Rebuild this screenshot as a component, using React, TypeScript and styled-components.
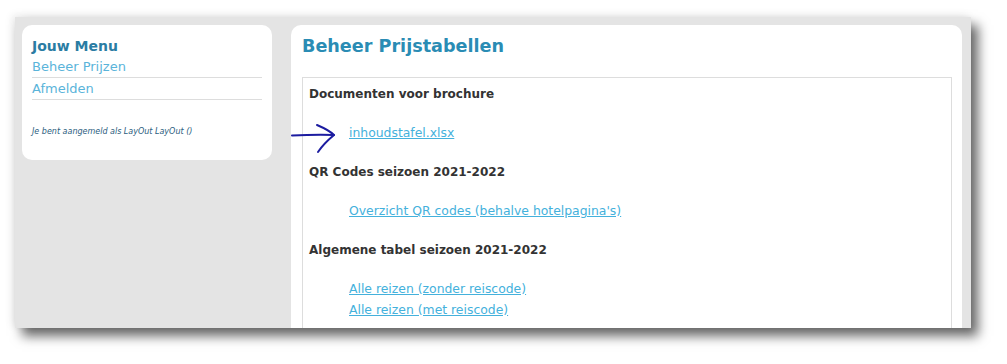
import React from "react";
import styled, { createGlobalStyle } from "styled-components";

const Global = createGlobalStyle`
  html, body { margin: 0; padding: 0; background: #ffffff; }
  body { width: 1007px; height: 364px; overflow: hidden; font-family: "DejaVu Sans", Verdana, sans-serif; }
`;

const Stage = styled.div`
  width: 1007px;
  height: 364px;
  padding: 17px 0 0 15px;
  box-sizing: border-box;
`;

const Frame = styled.div`
  width: 956px;
  height: 311px;
  background: #e4e4e4;
  box-sizing: border-box;
  padding: 8px 9px 0 7px;
  display: flex;
  align-items: flex-start;
  gap: 19px;
  overflow: hidden;
  box-shadow: 7px 8px 11px rgba(0, 0, 0, 0.6), -3px -2px 8px rgba(0, 0, 0, 0.08);
`;

const Sidebar = styled.aside`
  width: 250px;
  height: 135px;
  flex: none;
  background: #ffffff;
  border-radius: 10px;
  box-sizing: border-box;
  padding: 11px 10px 0 10px;
`;

const MenuTitle = styled.div`
  font-size: 14px;
  font-weight: bold;
  color: #2a7ca3;
  line-height: 20px;
`;

const MenuItem = styled.a`
  display: block;
  font-size: 13px;
  color: #5ab4da;
  line-height: 21px;
  border-bottom: 1px solid #dddddd;
  text-decoration: none;
`;

const Login = styled.div`
  margin-top: 26px;
  font-size: 8px;
  font-style: italic;
  color: #2b5d7e;
  line-height: 12px;
`;

const Main = styled.main`
  flex: 1;
  height: 330px;
  background: #ffffff;
  border-radius: 10px 10px 0 0;
  box-sizing: border-box;
  padding: 0 10px 0 11px;
  position: relative;
`;

const Title = styled.h1`
  margin: 0;
  padding-top: 10px;
  font-size: 17.6px;
  font-weight: bold;
  color: #2a8cb4;
  line-height: 22px;
  height: 52px;
  box-sizing: border-box;
`;

const ContentBox = styled.div`
  border: 1px solid #dddddd;
  border-bottom: none;
  height: 260px;
  padding: 6px 7px 0 6px;
`;

const Section = styled.div`
  margin-bottom: 19px;
`;

const SectionTitle = styled.div`
  font-size: 12px;
  font-weight: bold;
  color: #333333;
  line-height: 21px;
`;

const LinkList = styled.ul`
  list-style: none;
  margin: 17px 0 0 0;
  padding: 0 0 0 40px;
  font-size: 12.4px;
  line-height: 21px;
`;

const LinkItem = styled.li`
  height: 21px;
  line-height: 21px;
`;

const DocLink = styled.a`
  font-size: 12.4px;
  color: #44b1dc;
  text-decoration: underline;
`;

const Arrow = styled.svg`
  position: absolute;
  left: 0px;
  top: 100px;
  width: 48px;
  height: 32px;
  overflow: visible;
`;

const sections = [
  { title: "Documenten voor brochure", links: ["inhoudstafel.xlsx"] },
  { title: "QR Codes seizoen 2021-2022", links: ["Overzicht QR codes (behalve hotelpagina's)"] },
  {
    title: "Algemene tabel seizoen 2021-2022",
    links: ["Alle reizen (zonder reiscode)", "Alle reizen (met reiscode)"],
  },
];

export default function App() {
  return (
    <>
      <Global />
      <Stage>
        <Frame>
          <Sidebar>
            <MenuTitle>Jouw Menu</MenuTitle>
            <MenuItem href="#">Beheer Prijzen</MenuItem>
            <MenuItem href="#">Afmelden</MenuItem>
            <Login>Je bent aangemeld als LayOut LayOut ()</Login>
          </Sidebar>
          <Main>
            <Title>Beheer Prijstabellen</Title>
            <ContentBox>
              {sections.map((s) => (
                <Section key={s.title}>
                  <SectionTitle>{s.title}</SectionTitle>
                  <LinkList>
                    {s.links.map((l) => (
                      <LinkItem key={l}>
                        <DocLink href="#">{l}</DocLink>
                      </LinkItem>
                    ))}
                  </LinkList>
                </Section>
              ))}
            </ContentBox>
            <Arrow viewBox="0 0 48 32">
              <path
                d="M1 10.5 C 12 10, 28 9.5, 43 10"
                fill="none"
                stroke="#1c1ca0"
                strokeWidth="2"
                strokeLinecap="round"
              />
              <path
                d="M26 0 C 33 3, 39 6, 43 10 C 37 15, 31 21, 27 27"
                fill="none"
                stroke="#1c1ca0"
                strokeWidth="2"
                strokeLinecap="round"
                strokeLinejoin="round"
              />
            </Arrow>
          </Main>
        </Frame>
      </Stage>
    </>
  );
}
